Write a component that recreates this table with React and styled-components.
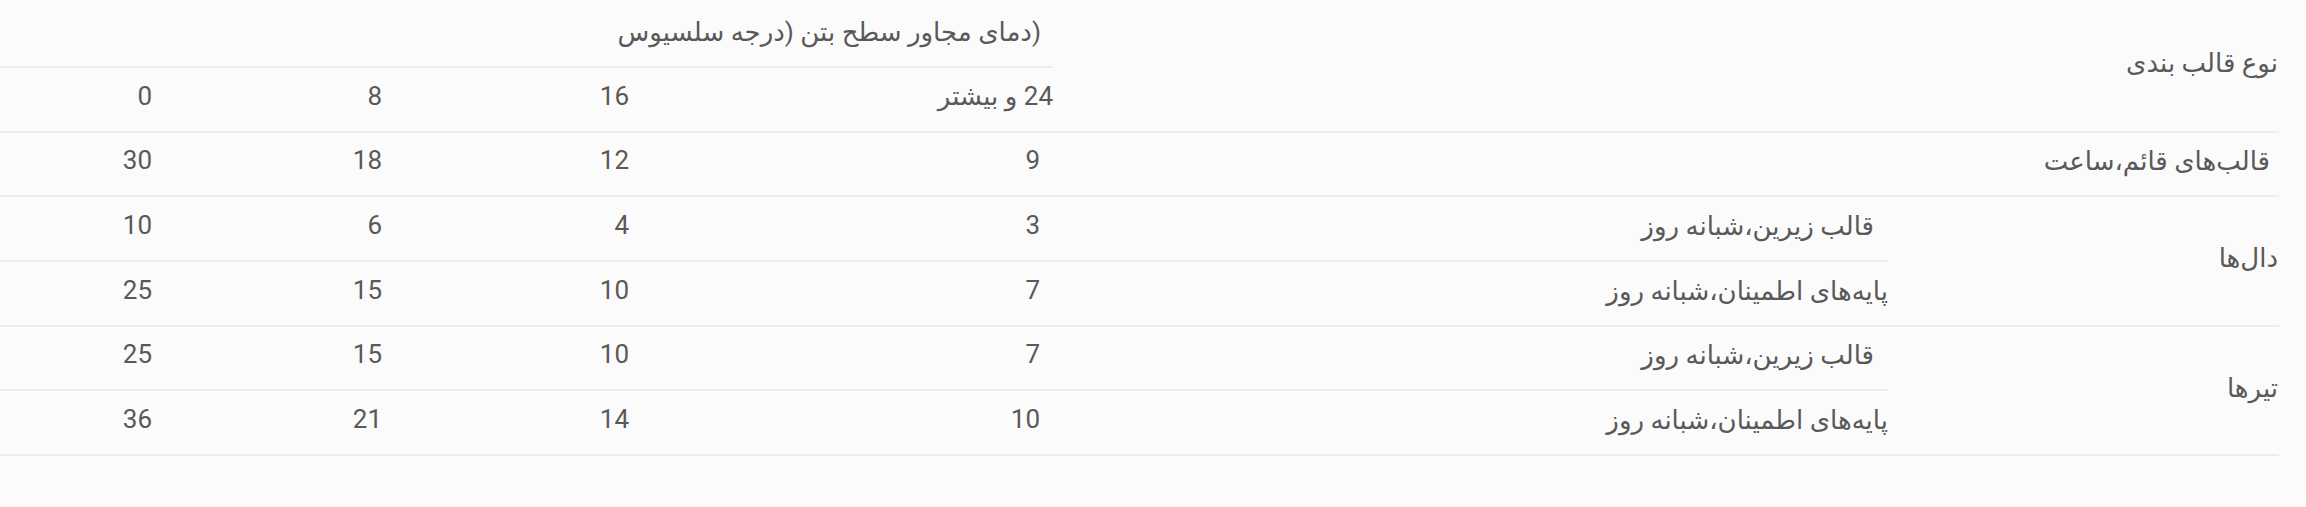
import React from "react";
import styled, { createGlobalStyle } from "styled-components";

const GlobalStyle = createGlobalStyle`
  html, body {
    margin: 0;
    padding: 0;
    background: #fcfbfc;
  }
  body {
    font-family: Roboto, "DejaVu Sans", sans-serif;
  }
`;

const Page = styled.div`
  direction: rtl;
  box-sizing: border-box;
  min-height: 507px;
  padding: 0 27px 0 0;
`;

const Grid = styled.div`
  display: grid;
  width: 2279px;
  grid-template-columns: 391px 835px 424px 247px 230px 152px;
  grid-template-rows: 68px repeat(6, 64.67px);
  color: #595959;
  font-size: 26px;
`;

const Cell = styled.div`
  grid-column: ${(p) => p.$col};
  grid-row: ${(p) => p.$row};
  display: flex;
  align-items: center;
  justify-content: flex-start;
  box-sizing: border-box;
  padding: 0 ${(p) => p.$inset || 0}px ${(p) => (p.$lift ?? 7)}px 0;
  border-bottom: 2px solid #ececec;
  white-space: nowrap;
`;

const groups = [
  {
    name: "دال‌ها",
    rows: [
      { label: "قالب زیرین،شبانه روز", inset: 14, values: ["3", "4", "6", "10"] },
      { label: "پایه‌های اطمینان،شبانه روز", inset: 0, values: ["7", "10", "15", "25"] },
    ],
  },
  {
    name: "تیرها",
    rows: [
      { label: "قالب زیرین،شبانه روز", inset: 14, values: ["7", "10", "15", "25"] },
      { label: "پایه‌های اطمینان،شبانه روز", inset: 0, values: ["10", "14", "21", "36"] },
    ],
  },
];

const numInsets = [13, 0, 0, 0];

function Numbers({ row, values, insets = numInsets }) {
  return values.map((v, i) => (
    <Cell key={i} $col={`${i + 3}`} $row={`${row}`} $inset={insets[i]}>
      {v}
    </Cell>
  ));
}

export default function App() {
  let rowIndex = 4;
  return (
    <>
      <GlobalStyle />
      <Page>
        <Grid>
          <Cell $col="1 / 3" $row="1 / 3" $inset={1} $lift={4}>
            نوع قالب بندی
          </Cell>
          <Cell $col="3 / 7" $row="1" $inset={12} $lift={2}>
            {"(دمای مجاور سطح بتن (درجه سلسیوس"}
          </Cell>
          <Numbers row={2} values={["24 و بیشتر", "16", "8", "0"]} insets={[0, 0, 0, 0]} />

          <Cell $col="1 / 3" $row="3" $inset={9} $lift={5}>
            قالب‌های قائم،ساعت
          </Cell>
          <Numbers row={3} values={["9", "12", "18", "30"]} />

          {groups.map((g) => {
            const start = rowIndex;
            rowIndex += g.rows.length;
            return (
              <React.Fragment key={g.name}>
                <Cell $col="1" $row={`${start} / ${start + g.rows.length}`} $inset={1} $lift={5}>
                  {g.name}
                </Cell>
                {g.rows.map((r, j) => (
                  <React.Fragment key={j}>
                    <Cell $col="2" $row={`${start + j}`} $inset={r.inset} $lift={5}>
                      {r.label}
                    </Cell>
                    <Numbers row={start + j} values={r.values} />
                  </React.Fragment>
                ))}
              </React.Fragment>
            );
          })}
        </Grid>
      </Page>
    </>
  );
}
